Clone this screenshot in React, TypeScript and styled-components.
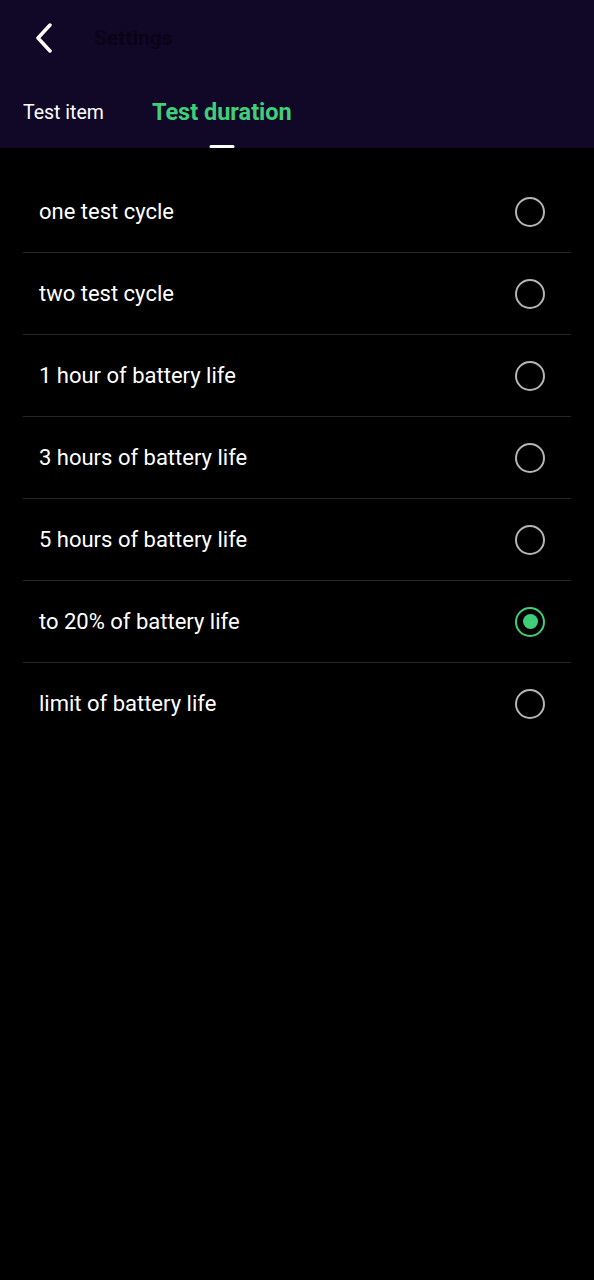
import React, { useState } from "react";
import styled, { createGlobalStyle } from "styled-components";

const GlobalStyle = createGlobalStyle`
  html, body {
    margin: 0;
    padding: 0;
    background: #000;
  }
  body {
    font-family: Roboto, "Noto Sans", "Liberation Sans", sans-serif;
  }
`;

const Page = styled.div`
  min-height: 1280px;
  width: 594px;
  background: #000;
  color: #fff;
`;

const Header = styled.header`
  background: #110727;
  height: 148px;
  display: flex;
  flex-direction: column;
`;

const TopBar = styled.div`
  height: 76px;
  display: flex;
  align-items: center;
  padding-left: 30px;
`;

const BackButton = styled.button`
  width: 28px;
  height: 36px;
  padding: 0;
  border: none;
  background: none;
  display: flex;
  align-items: center;
  justify-content: center;
  cursor: pointer;
`;

const Title = styled.h1`
  margin: 0 0 0 36px;
  font-size: 21px;
  font-weight: 700;
  color: #0b0419;
`;

const TabRow = styled.div`
  flex: 1;
  display: flex;
  align-items: stretch;
  padding-left: 23px;
  gap: 48px;
`;

const Tab = styled.button<{ $active?: boolean }>`
  position: relative;
  border: none;
  background: none;
  padding: 0;
  font-family: inherit;
  font-size: ${(p) => (p.$active ? "23.5px" : "19.5px")};
  font-weight: ${(p) => (p.$active ? 700 : 400)};
  color: ${(p) => (p.$active ? "#3fcf78" : "#ffffff")};
  cursor: pointer;
`;

const Indicator = styled.span`
  position: absolute;
  bottom: 0;
  left: 50%;
  transform: translateX(-50%);
  width: 25px;
  height: 3px;
  border-radius: 2px;
  background: #fff;
`;

const List = styled.ul`
  list-style: none;
  margin: 0;
  padding: 23px 23px 0;
`;

const Row = styled.li`
  height: 81px;
  display: flex;
  align-items: center;
  justify-content: space-between;
  padding: 0 26px 0 16px;
  border-bottom: 1px solid #262626;
  cursor: pointer;

  &:last-child {
    border-bottom: none;
  }
`;

const Label = styled.span`
  font-size: 22px;
  color: #fff;
`;

const Radio = styled.span<{ $checked?: boolean }>`
  width: 30px;
  height: 30px;
  box-sizing: border-box;
  border-radius: 50%;
  border: 2.5px solid ${(p) => (p.$checked ? "#3fcf78" : "#b5b5b5")};
  display: flex;
  align-items: center;
  justify-content: center;

  &::after {
    content: "";
    display: ${(p) => (p.$checked ? "block" : "none")};
    width: 15px;
    height: 15px;
    border-radius: 50%;
    background: #3fcf78;
  }
`;

const options = [
  "one test cycle",
  "two test cycle",
  "1 hour of battery life",
  "3 hours of battery life",
  "5 hours of battery life",
  "to 20% of battery life",
  "limit of battery life",
];

const App = () => {
  const [tab, setTab] = useState(1);
  const [selected, setSelected] = useState(5);

  return (
    <Page>
      <GlobalStyle />
      <Header>
        <TopBar>
          <BackButton aria-label="Back">
            <svg width="20" height="30" viewBox="0 0 20 30">
              <path d="M16 2 L4 15 L16 28" fill="none" stroke="#fff" strokeWidth="3.5" strokeLinecap="round" strokeLinejoin="round" />
            </svg>
          </BackButton>
          <Title>Settings</Title>
        </TopBar>
        <TabRow>
          <Tab $active={tab === 0} onClick={() => setTab(0)}>
            Test item
            {tab === 0 && <Indicator />}
          </Tab>
          <Tab $active={tab === 1} onClick={() => setTab(1)}>
            Test duration
            {tab === 1 && <Indicator />}
          </Tab>
        </TabRow>
      </Header>
      <List>
        {options.map((o, i) => (
          <Row key={o} onClick={() => setSelected(i)}>
            <Label>{o}</Label>
            <Radio $checked={selected === i} />
          </Row>
        ))}
      </List>
    </Page>
  );
};

export default App;
